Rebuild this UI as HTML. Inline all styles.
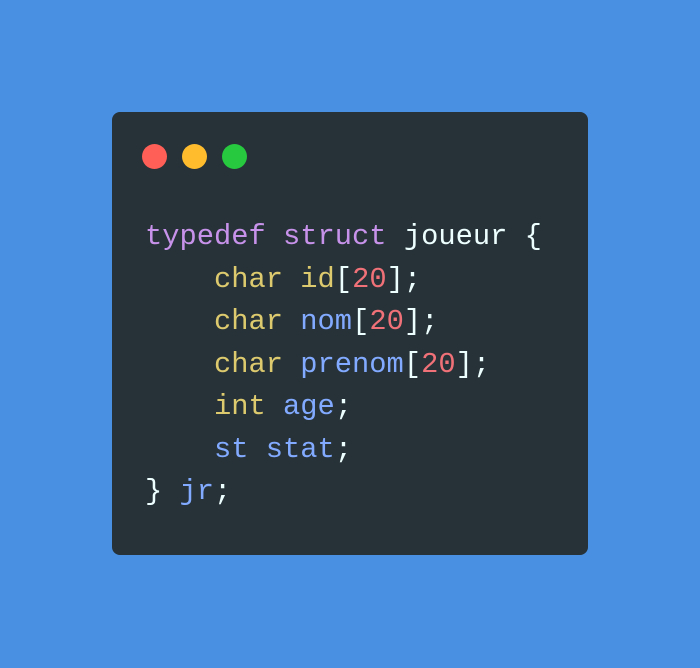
<!DOCTYPE html>
<html><head><meta charset="utf-8"><style>
html,body{margin:0;padding:0;}
body{width:700px;height:668px;background:#4a90e2;position:relative;overflow:hidden;}
.win{position:absolute;left:112px;top:112px;width:476px;height:443px;background:#263238;border-radius:8px;}
.dot{position:absolute;top:32px;width:25px;height:25px;border-radius:50%;}
pre{position:absolute;left:33px;top:104px;margin:0;font-family:"Liberation Mono",monospace;font-size:28.75px;line-height:42.5px;color:#eeffff;white-space:pre;}
.k{color:#c792ea}.y{color:#ddca6e}.b{color:#82aaff}.n{color:#f07178}
</style></head><body>
<div class="win">
<div class="dot" style="left:30px;background:#ff5f56"></div>
<div class="dot" style="left:70px;background:#ffbd2e"></div>
<div class="dot" style="left:110px;background:#27c93f"></div>
<pre><span class="k">typedef</span> <span class="k">struct</span> joueur {
    <span class="y">char</span> <span class="y">id</span>[<span class="n">20</span>];
    <span class="y">char</span> <span class="b">nom</span>[<span class="n">20</span>];
    <span class="y">char</span> <span class="b">prenom</span>[<span class="n">20</span>];
    <span class="y">int</span> <span class="b">age</span>;
    <span class="b">st</span> <span class="b">stat</span>;
} <span class="b">jr</span>;</pre>
</div>
</body></html>
